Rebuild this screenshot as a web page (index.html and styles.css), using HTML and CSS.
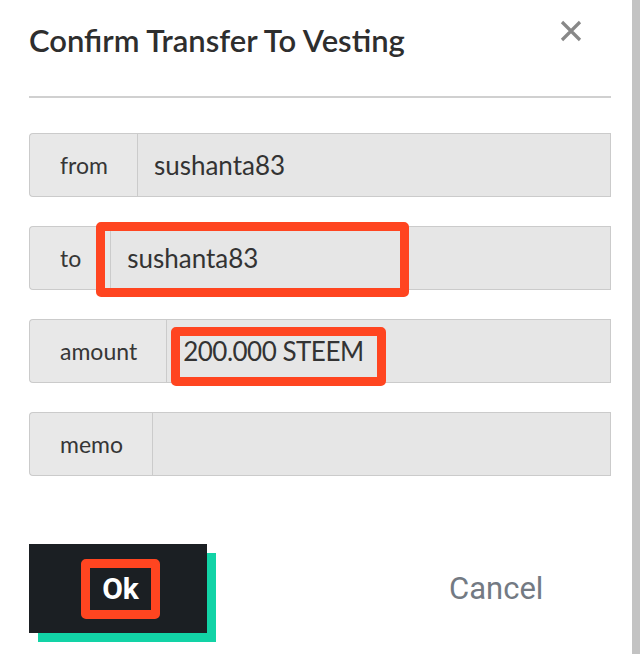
FILE: index.html
```html
<!DOCTYPE html>
<html lang="en">
<head>
<meta charset="utf-8">
<title>Confirm Transfer To Vesting</title>
<link rel="stylesheet" href="styles.css">
</head>
<body>
<div class="screen">
  <div class="dialog">
    <header class="head">
      <h1 class="title">Confirm Transfer To Vesting</h1>
      <button class="close" aria-label="Close">
        <svg width="22" height="22" viewBox="0 0 22 22"><path d="M2 2 L20 20 M20 2 L2 20" stroke="#888" stroke-width="3.2" fill="none"/></svg>
      </button>
    </header>
    <div class="rule"></div>
    <div class="fields">
      <div class="row">
        <span class="label">from</span>
        <span class="value">sushanta83</span>
      </div>
      <div class="row">
        <span class="label">to</span>
        <span class="value">sushanta83</span>
        <span class="mark mark-to"></span>
      </div>
      <div class="row">
        <span class="label">amount</span>
        <span class="value value-amount">200.000 STEEM</span>
        <span class="mark mark-amount"></span>
      </div>
      <div class="row">
        <span class="label">memo</span>
        <span class="value"></span>
      </div>
    </div>
    <div class="actions">
      <button class="ok"><span class="ok-text">Ok</span></button>
      <button class="cancel">Cancel</button>
    </div>
  </div>
  <div class="rail"></div>
</div>
</body>
</html>
```
FILE: styles.css
```css
html, body {
  margin: 0;
  padding: 0;
  background: #ffffff;
}
.screen {
  display: flex;
  width: 640px;
  height: 654px;
  overflow: hidden;
}
.dialog {
  flex: 1;
  padding: 0 21px 0 29px;
  font-family: "Lato", "Open Sans", sans-serif;
  color: #333;
}
.rail {
  width: 8px;
  background: #c3c3c3;
}
.head {
  display: flex;
  align-items: flex-start;
  justify-content: space-between;
  height: 96px;
}
.title {
  margin: 20px 0 0 0;
  font-size: 31px;
  font-weight: 600;
  line-height: 40px;
  color: #2e2e2e;
}
.close {
  margin: 20px 29px 0 0;
  padding: 0;
  border: 0;
  background: none;
  width: 22px;
  height: 22px;
  display: block;
}
.close svg { display: block; }
.rule {
  height: 2px;
  background: #d0d0d0;
}
.fields {
  margin-top: 35px;
  display: flex;
  flex-direction: column;
  gap: 29px;
}
.row {
  position: relative;
  display: flex;
  height: 64px;
}
.label {
  display: flex;
  align-items: center;
  padding: 0 29px 0 30px;
  background: #e8e8e8;
  border: 1px solid #cbcbcb;
  border-right: 0;
  border-radius: 4px 0 0 4px;
  font-size: 23px;
  color: #363636;
}
.value {
  flex: 1;
  display: flex;
  align-items: center;
  padding: 0 16px;
  background: #e6e6e6;
  border: 1px solid #cbcbcb;
  font-size: 26px;
  color: #333;
}
.value-amount {
  letter-spacing: -0.5px;
}
.mark {
  position: absolute;
  border: 9px solid #ff4520;
  border-radius: 5px;
  box-sizing: border-box;
}
.mark-to {
  left: 67px;
  top: -4px;
  width: 313px;
  height: 75px;
}
.mark-amount {
  left: 142px;
  top: 8px;
  width: 215px;
  height: 59px;
}
.actions {
  margin-top: 68px;
  display: flex;
  align-items: center;
}
.ok {
  width: 178px;
  height: 89px;
  border: 0;
  padding: 0;
  background: #1b1f23;
  box-shadow: 9px 9px 0 #12d3a6;
  display: flex;
  align-items: center;
  justify-content: center;
}
.ok-text {
  display: inline-block;
  margin-left: 5px;
  border: 9px solid #ff4520;
  border-radius: 5px;
  padding: 0 12px;
  height: 42px;
  line-height: 42px;
  font-family: "Roboto", sans-serif;
  font-weight: 700;
  font-size: 30px;
  color: #ffffff;
}
.cancel {
  margin-left: 242px;
  border: 0;
  padding: 0;
  background: none;
  font-family: "Roboto", sans-serif;
  font-size: 31px;
  color: #737a83;
}
```
